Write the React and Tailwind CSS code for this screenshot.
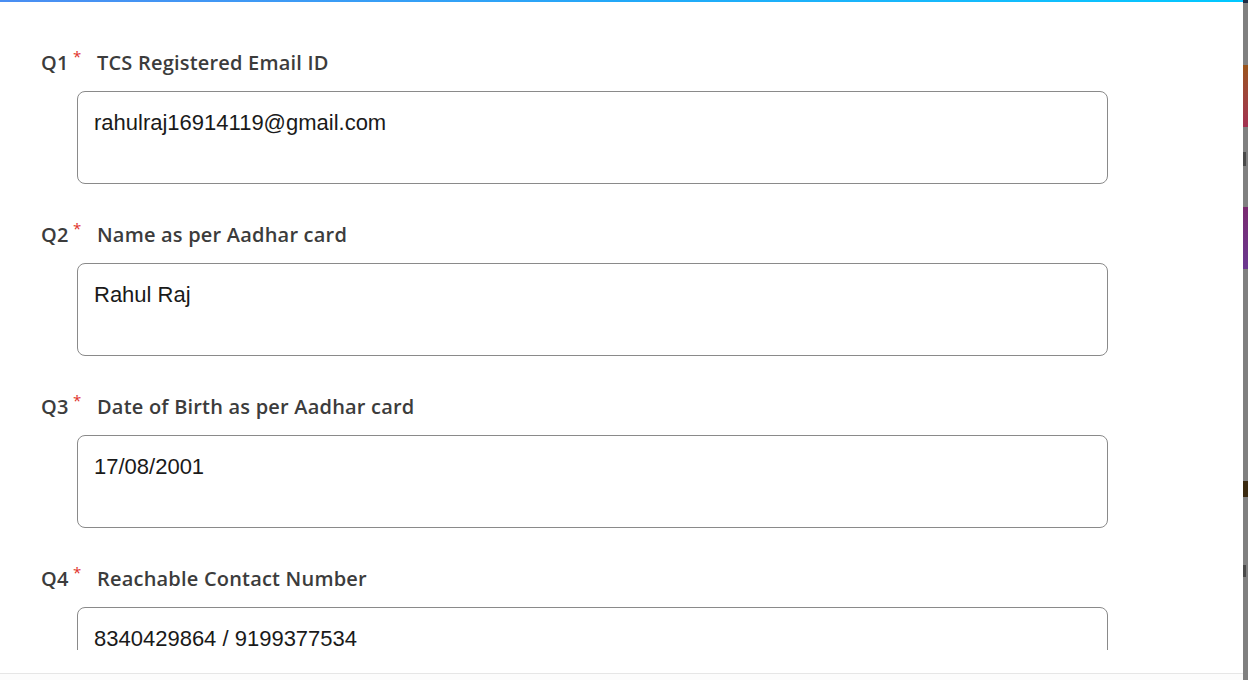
import React from "react";

const questions = [
  { no: "Q1", label: "TCS Registered Email ID", value: "rahulraj16914119@gmail.com" },
  { no: "Q2", label: "Name as per Aadhar card", value: "Rahul Raj" },
  { no: "Q3", label: "Date of Birth as per Aadhar card", value: "17/08/2001" },
  { no: "Q4", label: "Reachable Contact Number", value: "8340429864 / 9199377534" },
];

function Question({ no, label, value }) {
  return (
    <div className="pb-[39px]">
      <div className="flex h-[24px] items-center pl-[41px] font-['Open_Sans',sans-serif] text-[20px] font-semibold tracking-[0.2px] text-[#3c3c3c]">
        <span className="w-[32px] shrink-0">{no}</span>
        <span className="w-[24px] shrink-0 self-start text-[15px] leading-[10px] font-normal text-[#e0302a]">*</span>
        <span>{label}</span>
      </div>
      <div className="ml-[77px] mt-[16px] h-[93px] w-[1031px] rounded-[8px] border border-[#8a8a8a] px-[16px] pt-[18px] font-['Liberation_Sans',Arial,sans-serif] text-[22px] leading-[25px] text-[#1a1a1a]">
        {value}
      </div>
    </div>
  );
}

function SideStrip() {
  return (
    <div className="flex h-[680px] w-[5px] flex-col bg-[#808080]">
      <div className="h-[3px] bg-[#1c2a44]" />
      <div className="h-[62px]" />
      <div className="h-[62px] bg-gradient-to-b from-[#9a5418] to-[#a23050]" />
      <div className="h-[25px]" />
      <div className="h-[14px] w-[3px] bg-[#4a4a4a]" />
      <div className="h-[41px]" />
      <div className="h-[62px] bg-gradient-to-b from-[#7a2a70] to-[#6a3890]" />
      <div className="h-[212px]" />
      <div className="h-[16px] bg-[#3a2a10]" />
      <div className="h-[68px]" />
      <div className="h-[12px] w-[3px] bg-[#4a4a4a]" />
    </div>
  );
}

export default function App() {
  return (
    <div className="flex h-[680px] w-[1248px] overflow-hidden bg-white">
      <div className="flex h-[680px] w-[1243px] flex-col">
        <div className="h-[2px] bg-gradient-to-r from-[#4a8ef2] via-[#22a8f8] to-[#00c8ff]" />
        <div className="h-[648px] overflow-hidden pt-[49px]">
          {questions.map((q) => (
            <Question key={q.no} {...q} />
          ))}
        </div>
        <div className="h-[23px]" />
        <div className="h-[1px] bg-[#e6e6e6]" />
        <div className="flex-1 bg-[#fcfcfc]" />
      </div>
      <SideStrip />
    </div>
  );
}
